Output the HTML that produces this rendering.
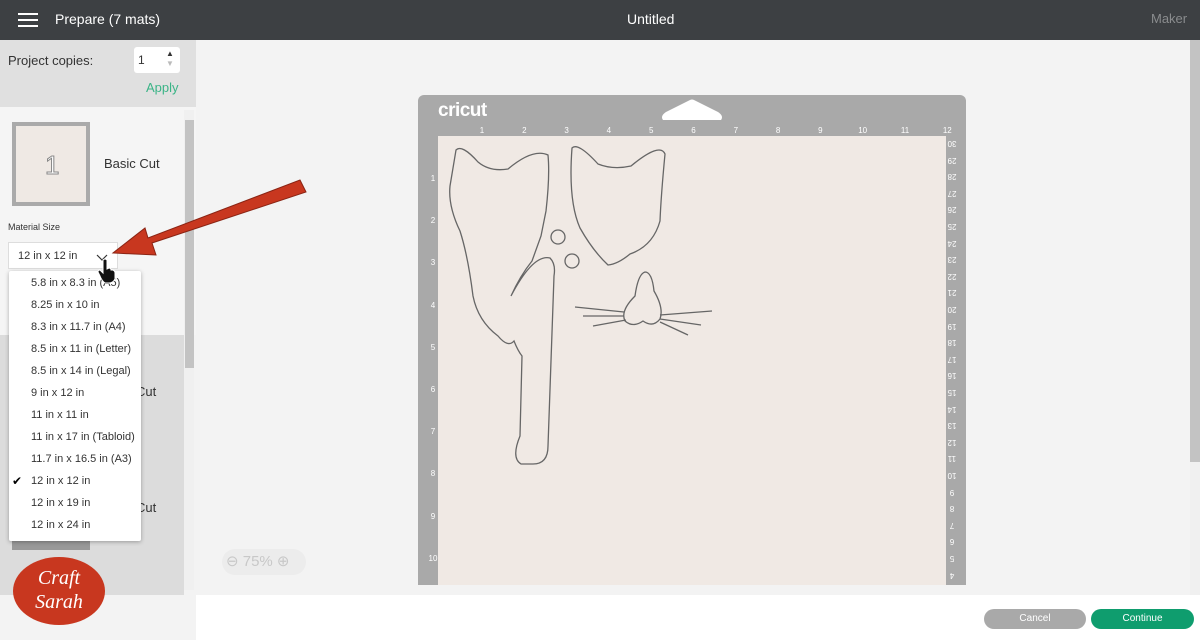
<!DOCTYPE html>
<html><head><meta charset="utf-8"><style>
*{margin:0;padding:0;box-sizing:border-box}
body{width:1200px;height:640px;overflow:hidden;font-family:"Liberation Sans",sans-serif;background:#f3f3f3;position:relative;color:#333}
.abs{position:absolute}
#hdr{left:0;top:0;width:1200px;height:40px;background:#3d4043;color:#fff}
.menu{left:18px;top:13px;width:20px;height:2px;background:#fff;box-shadow:0 6px 0 #fff,0 12px 0 #fff}
.rn{position:absolute;font-size:8px;color:#fff;width:14px;text-align:center}
.rr{position:absolute;font-size:8px;color:#fff;transform:rotate(180deg);width:14px;text-align:center}
.dd div{height:22px;line-height:22px;padding-left:22px;font-size:11px;color:#333}
</style></head><body>
<div id="hdr" class="abs">
<div class="abs menu"></div>
<div class="abs" style="left:55px;top:11px;font-size:14px">Prepare (7 mats)</div>
<div class="abs" style="left:627px;top:11px;font-size:14px">Untitled</div>
<div class="abs" style="left:1151px;top:11px;font-size:13px;color:#8a8c8e">Maker</div>
</div>
<div class="abs" style="left:0;top:40px;width:196px;height:67px;background:#e0e0e0"></div>
<div class="abs" style="left:8px;top:53px;font-size:13px">Project copies:</div>
<div class="abs" style="left:134px;top:47px;width:46px;height:26px;background:#fff;border-radius:3px;font-size:12px;padding:6px 4px">1<span class="abs" style="left:32px;top:2px;font-size:8px">▲</span><span class="abs" style="left:32px;top:12px;font-size:8px;color:#bbb">▼</span></div>
<div class="abs" style="left:146px;top:80px;font-size:13px;color:#3bb487">Apply</div>
<div class="abs" style="left:0;top:107px;width:196px;height:228px;background:#f5f5f5"></div>
<div class="abs" style="left:0;top:335px;width:184px;height:260px;background:#dcdcdc"></div>
<div class="abs" style="left:0;top:595px;width:196px;height:45px;background:#f3f3f3"></div>
<div class="abs" style="left:184px;top:110px;width:10px;height:480px;background:#f0f0f0"></div>
<div class="abs" style="left:185px;top:120px;width:9px;height:248px;background:#c3c3c3"></div>
<div class="abs" style="left:12px;top:122px;width:78px;height:84px;background:#aaa;padding:4px"><div style="width:100%;height:100%;background:#efe9e4"></div></div>
<div class="abs" style="left:45px;top:150px;font-size:26px;color:#fff;-webkit-text-stroke:1px #888">1</div>
<div class="abs" style="left:104px;top:156px;font-size:13px">Basic Cut</div>
<div class="abs" style="left:136px;top:384px;font-size:13px">Cut</div>
<div class="abs" style="left:136px;top:500px;font-size:13px">Cut</div>
<div class="abs" style="left:12px;top:536px;width:78px;height:14px;background:#999"></div>
<div class="abs" style="left:8px;top:222px;font-size:9px">Material Size</div>
<div class="abs" style="left:8px;top:242px;width:110px;height:27px;background:#fff;border:1px solid #ddd;font-size:11px;padding:7px 9px">12 in x 12 in</div>
<svg class="abs" style="left:96px;top:254px" width="12" height="8"><path d="M1,1 L6,6 L11,1" fill="none" stroke="#333" stroke-width="1.2"/></svg>
<div class="abs dd" style="left:9px;top:271px;width:132px;height:270px;background:#fff;box-shadow:0 1px 4px rgba(0,0,0,.3);border-radius:2px;padding-top:1px">
<div>5.8 in x 8.3 in (A5)</div><div>8.25 in x 10 in</div><div>8.3 in x 11.7 in (A4)</div><div>8.5 in x 11 in (Letter)</div><div>8.5 in x 14 in (Legal)</div><div>9 in x 12 in</div><div>11 in x 11 in</div><div>11 in x 17 in (Tabloid)</div><div>11.7 in x 16.5 in (A3)</div><div style="position:relative"><span class="abs" style="left:3px;top:0;font-size:12px;color:#000">✔</span>12 in x 12 in</div><div>12 in x 19 in</div><div>12 in x 24 in</div>
</div>
<div class="abs" style="left:13px;top:557px;width:92px;height:68px;border-radius:50%;background:#c8371f;color:#fff;font-family:'Liberation Serif',serif;font-style:italic;text-align:center;font-size:20px;line-height:24px;padding-top:9px">Craft<br>Sarah</div>
<svg class="abs" style="left:100px;top:175px" width="215" height="95"><polygon points="200,5 206,17 52,68 56,80 13,78 45,53 48,63" fill="#c8371f" stroke="#8a2414" stroke-width="1"/></svg>
<svg class="abs" style="left:97px;top:258px" width="20" height="26"><path d="M6,2 Q8,0 10,2 L10,11 L12,10 Q14,10 14,12 L16,12 Q18,13 18,15 L18,21 Q16,25 12,25 L8,25 Q5,23 3,18 L1,14 Q1,12 3,12 L6,15 Z" fill="#111" stroke="#fff" stroke-width="1"/></svg>
<div class="abs" style="left:196px;top:595px;width:1004px;height:45px;background:#fff"></div>
<div class="abs" style="left:1190px;top:40px;width:10px;height:555px;background:#f0f0f0"></div>
<div class="abs" style="left:1190px;top:40px;width:10px;height:422px;background:#c3c3c3"></div>
<div class="abs" style="left:984px;top:609px;width:102px;height:20px;border-radius:10px;background:#a9a9a9;color:#fff;font-size:10px;text-align:center;line-height:20px">Cancel</div>
<div class="abs" style="left:1091px;top:609px;width:103px;height:20px;border-radius:10px;background:#0f9d6e;color:#fff;font-size:10px;text-align:center;line-height:20px">Continue</div>
<div class="abs" style="left:222px;top:549px;width:84px;height:26px;border-radius:13px;background:#ececec;color:#c8c8c8;font-size:15px;line-height:26px;padding-left:4px">⊖ 75% ⊕</div>
<div class="abs" style="left:418px;top:95px;width:548px;height:490px;background:#a9a9a9;border-radius:6px 6px 0 0"></div>
<div class="abs" style="left:438px;top:136px;width:508px;height:449px;background:#f0e9e4"></div>
<div class="abs" style="left:438px;top:100px;font-size:19px;font-weight:bold;color:#fff;letter-spacing:-0.5px">cricut</div>
<svg class="abs" style="left:660px;top:99px" width="64" height="22"><path d="M3,21 Q0,17 6,13 L30,1 Q32,0 34,1 L58,13 Q64,17 61,21 Z" fill="#fff"/></svg>
<div id="r"></div>
<svg class="abs" style="left:438px;top:136px" width="300" height="340" fill="none" stroke="#666" stroke-width="1.3">
<path d="M18,14 Q24,8 40,26 Q52,36 70,33 Q95,12 110,19 Q112,40 108,75 L103,100 L94,125 Q82,140 73,160 Q95,118 112,122 Q118,128 116,140 Q112,250 110,310 Q110,328 95,328 L83,328 Q73,322 82,300 L84,220 Q80,215 76,205 Q70,212 60,200 Q40,185 35,160 Q30,120 22,95 Q10,70 12,50 Z"/>
<path d="M134,12 Q140,6 160,28 Q175,34 193,30 Q222,6 227,18 Q223,60 222,85 Q215,110 192,118 Q180,128 170,129 Q155,115 142,92 Q130,65 134,12Z"/>
<circle cx="120" cy="101" r="7"/><circle cx="134" cy="125" r="7"/>
<path d="M207,136 Q214,136 216,155 Q226,172 222,183 Q215,192 205,185 Q195,192 187,185 Q182,175 197,160 Q200,138 207,136Z"/>
<path d="M137,171 L186,176 M145,180 L186,180 M155,190 L188,184 M222,179 L274,175 M222,183 L263,189 M222,186 L250,199"/>
</svg>
<script>
var h='';
for(var i=1;i<=12;i++)h+='<div class="rn" style="left:'+(475+i*42.3-42.3)+'px;top:126px">'+i+'</div>';
for(var i=1;i<=10;i++)h+='<div class="rn" style="left:426px;top:'+(174+(i-1)*42.2)+'px">'+i+'</div>';
for(var i=30;i>=4;i--)h+='<div class="rr" style="left:945px;top:'+(139+(30-i)*16.6)+'px">'+i+'</div>';
document.getElementById('r').innerHTML=h;
</script>
</body></html>
